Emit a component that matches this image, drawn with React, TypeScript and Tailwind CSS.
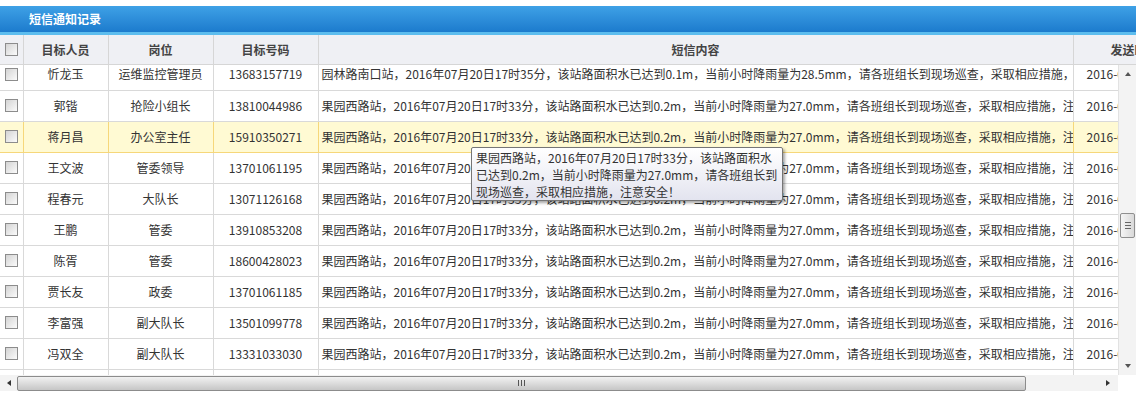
import React from 'react';

const FONT = { fontFamily: '"Microsoft YaHei", "Noto Sans CJK SC", "Noto Sans", sans-serif' };

const MSG_A = '园林路南口站，2016年07月20日17时35分，该站路面积水已达到0.1m，当前小时降雨量为28.5mm，请各班组长到现场巡查，采取相应措施，注意安全！';
const MSG_B = '果园西路站，2016年07月20日17时33分，该站路面积水已达到0.2m，当前小时降雨量为27.0mm，请各班组长到现场巡查，采取相应措施，注意安全！';

const rows = [
    { name: '忻龙玉', post: '运维监控管理员', phone: '13683157719', msg: MSG_A },
    { name: '郭锴', post: '抢险小组长', phone: '13810044986', msg: MSG_B },
    { name: '蒋月昌', post: '办公室主任', phone: '15910350271', msg: MSG_B, hot: true },
    { name: '王文波', post: '管委领导', phone: '13701061195', msg: MSG_B },
    { name: '程春元', post: '大队长', phone: '13071126168', msg: MSG_B },
    { name: '王鹏', post: '管委', phone: '13910853208', msg: MSG_B },
    { name: '陈胥', post: '管委', phone: '18600428023', msg: MSG_B },
    { name: '贾长友', post: '政委', phone: '13701061185', msg: MSG_B },
    { name: '李富强', post: '副大队长', phone: '13501099778', msg: MSG_B },
    { name: '冯双全', post: '副大队长', phone: '13331033030', msg: MSG_B },
    { name: '', post: '', phone: '', msg: '' },
];

const Check = () => (
    <div className="w-[13px] h-[13px] border border-[#8c8c8c] bg-gradient-to-br from-[#d4d4d4] to-[#fbfbfb] mx-auto" />
);

const Cols = () => (
    <colgroup>
        <col className="w-[23px]" />
        <col className="w-[85px]" />
        <col className="w-[105px]" />
        <col className="w-[105px]" />
        <col className="w-[755px]" />
        <col className="w-[150px]" />
    </colgroup>
);

export default function App() {
    return (
        <div className="relative w-[1140px] h-[393px] bg-white overflow-hidden text-[12px]" style={FONT}>
            {/* title bar */}
            <div className="mt-[6px] w-[1136px] h-[26px] bg-gradient-to-b from-[#3ea1e6] to-[#1c7bcd] flex items-center pl-[29px]">
                <span className="text-white font-bold text-[12px]">短信通知记录</span>
            </div>
            <div className="w-[1136px] h-[3px] bg-[#5dbdee]" />

            {/* header */}
            <div className="w-[1136px] h-[30px] overflow-hidden bg-[#eff0f4] border-b border-[#d6d6d6]">
                <table className="table-fixed border-collapse w-[1223px]">
                    <Cols />
                    <thead>
                        <tr className="h-[29px] text-[#444] font-bold">
                            <th className="border-r border-[#d6d6d6]"><Check /></th>
                            <th className="border-r border-[#d6d6d6]">目标人员</th>
                            <th className="border-r border-[#d6d6d6]">岗位</th>
                            <th className="border-r border-[#d6d6d6]">目标号码</th>
                            <th className="border-r border-[#d6d6d6]">短信内容</th>
                            <th className="text-left pl-[37px] whitespace-nowrap">发送时间</th>
                        </tr>
                    </thead>
                </table>
            </div>

            {/* body + vertical scrollbar */}
            <div className="flex w-[1136px] h-[310px]">
                <div className="w-[1118px] h-[310px] overflow-hidden">
                    <table className="table-fixed border-collapse w-[1223px] -mt-[6px] text-[#333]">
                        <Cols />
                        <tbody>
                            {rows.map((r, i) => {
                                const cell = r.hot
                                    ? 'border-r border-b border-t border-[#f6d77a] bg-[#fffad3]'
                                    : 'border-r border-b border-[#d9d9d9]';
                                return (
                                    <tr key={i} className="h-[31px]">
                                        <td className={cell}>{r.phone && <Check />}</td>
                                        <td className={`${cell} text-center`}>{r.name}</td>
                                        <td className={`${cell} text-center`}>{r.post}</td>
                                        <td className={`${cell} text-center`}>{r.phone}</td>
                                        <td className={`${cell} pl-[3px] whitespace-nowrap overflow-hidden`}>{r.msg}</td>
                                        <td className={`${cell} pl-[13px] whitespace-nowrap overflow-hidden`}>{r.phone ? '2016-07-20 17:35' : ''}</td>
                                    </tr>
                                );
                            })}
                        </tbody>
                    </table>
                </div>

                {/* vertical scrollbar */}
                <div className="w-[18px] h-[310px] bg-[#f3f3f3] border-l border-[#e2e2e2] flex flex-col items-center">
                    <div className="h-[18px] flex items-center justify-center">
                        <div className="w-0 h-0 border-l-[3px] border-r-[3px] border-b-[4px] border-l-transparent border-r-transparent border-b-[#555]" />
                    </div>
                    <div className="h-[130px]" />
                    <div className="w-[15px] h-[25px] rounded-[2px] border border-[#8f8f8f] bg-gradient-to-r from-[#f5f5f5] to-[#d9d9d9] flex flex-col items-center justify-center gap-[2px]">
                        <div className="w-[6px] h-px bg-[#666]" />
                        <div className="w-[6px] h-px bg-[#666]" />
                        <div className="w-[6px] h-px bg-[#666]" />
                    </div>
                    <div className="flex-1" />
                    <div className="h-[18px] flex items-center justify-center">
                        <div className="w-0 h-0 border-l-[3px] border-r-[3px] border-t-[4px] border-l-transparent border-r-transparent border-t-[#555]" />
                    </div>
                </div>
            </div>

            {/* horizontal scrollbar */}
            <div className="flex w-[1136px] h-[16px]">
                <div className="w-[1118px] h-[16px] bg-[#f3f3f3] flex items-center">
                    <div className="w-[17px] flex items-center justify-center">
                        <div className="w-0 h-0 border-t-[3px] border-b-[3px] border-r-[4px] border-t-transparent border-b-transparent border-r-[#333]" />
                    </div>
                    <div className="w-[1009px] h-[15px] rounded-[2px] border border-[#8c8c8c] bg-gradient-to-b from-[#f2f2f2] to-[#c6c6c6] flex items-center justify-center gap-[2px]">
                        <div className="w-px h-[6px] bg-[#555]" />
                        <div className="w-px h-[6px] bg-[#555]" />
                        <div className="w-px h-[6px] bg-[#555]" />
                    </div>
                    <div className="flex-1 flex items-center justify-end pr-[8px]">
                        <div className="w-0 h-0 border-t-[3px] border-b-[3px] border-l-[4px] border-t-transparent border-b-transparent border-l-[#333]" />
                    </div>
                </div>
                <div className="w-[18px] h-[16px] bg-white" />
            </div>

            {/* tooltip */}
            <div className="absolute left-[471px] top-[147px] w-[312px] h-[54px] border border-[#767676] rounded-[2px] bg-gradient-to-b from-white to-[#e3e4ef] shadow-[2px_2px_3px_rgba(0,0,0,0.35)] px-[4px] pt-px leading-[17px] text-[#333]">
                果园西路站，2016年07月20日17时33分，该站路面积水已达到0.2m，当前小时降雨量为27.0mm，请各班组长到现场巡查，采取相应措施，注意安全！
            </div>
        </div>
    );
}
